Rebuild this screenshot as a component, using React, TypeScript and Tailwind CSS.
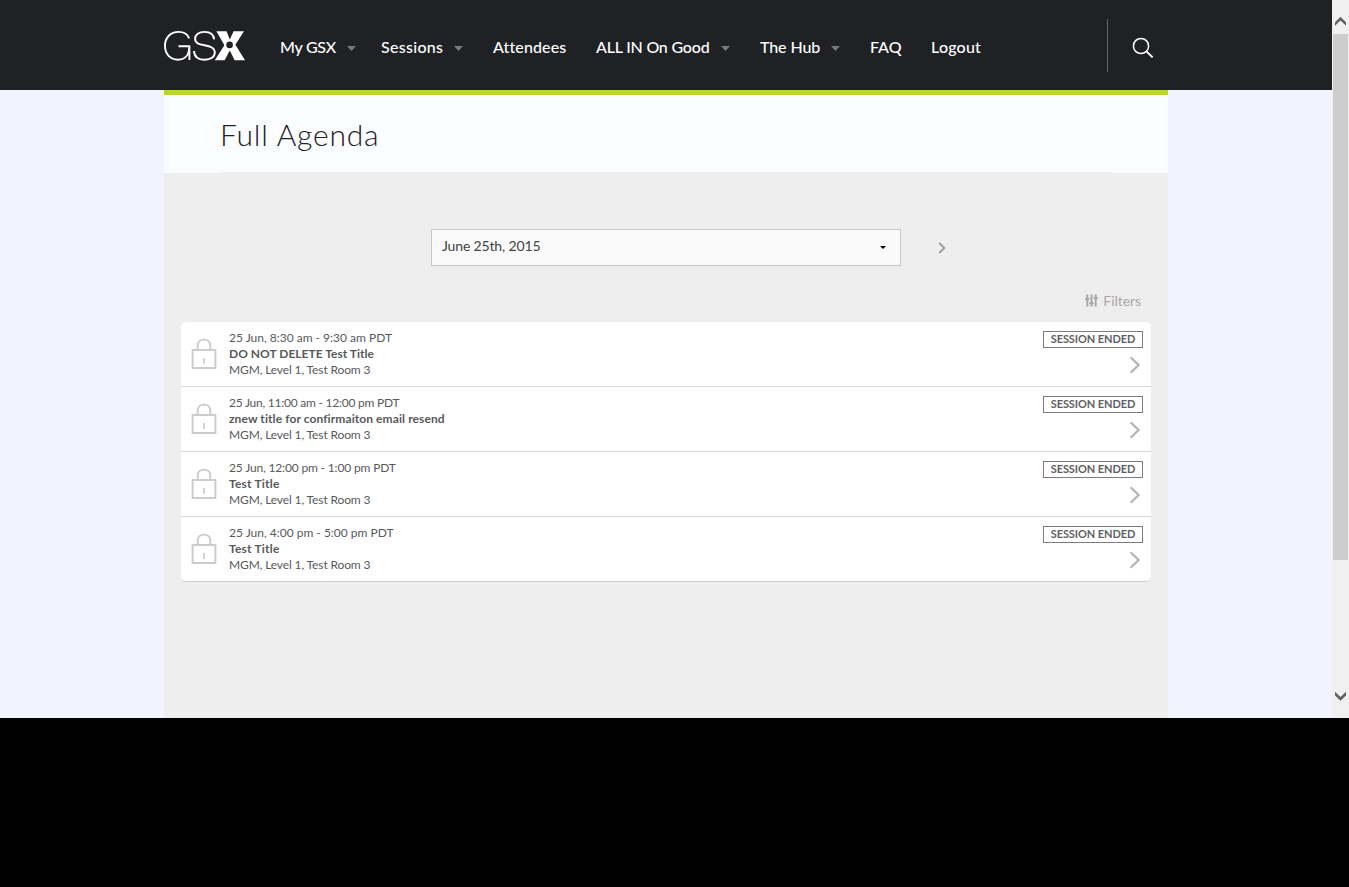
import React from "react";

type NavItem = { label: string; width: string; menu?: boolean; text: string };

const navItems: NavItem[] = [
  { label: "My GSX", width: "w-[76px] mr-[25px]", menu: true, text: "tracking-[-0.25px]" },
  { label: "Sessions", width: "w-[82px] mr-[30px]", menu: true, text: "tracking-[0.3px]" },
  { label: "Attendees", width: "w-[73px] mr-[30px]", text: "tracking-[0.12px]" },
  { label: "ALL IN On Good", width: "w-[134px] mr-[30px]", menu: true, text: "tracking-[-0.2px]" },
  { label: "The Hub", width: "w-[80px] mr-[30px]", menu: true, text: "tracking-[-0.1px]" },
  { label: "FAQ", width: "w-[32px] mr-[29px]", text: "tracking-[0px]" },
  { label: "Logout", width: "w-[50px]", text: "tracking-[0.2px]" },
];

const sessions = [
  { time: "25 Jun, 8:30 am - 9:30 am PDT", timeText: "tracking-[0px]", title: "DO NOT DELETE Test Title", titleText: "tracking-[0.02px]" },
  { time: "25 Jun, 11:00 am - 12:00 pm PDT", timeText: "tracking-[-0.24px]", title: "znew title for confirmaiton email resend", titleText: "tracking-[0.09px]" },
  { time: "25 Jun, 12:00 pm - 1:00 pm PDT", timeText: "tracking-[-0.16px]", title: "Test Title", titleText: "tracking-[0.2px]" },
  { time: "25 Jun, 4:00 pm - 5:00 pm PDT", timeText: "tracking-[0px]", title: "Test Title", titleText: "tracking-[0.2px]" },
];

function Logo() {
  return (
    <svg className="block h-[32px] w-[82px] shrink-0" viewBox="0 0 82 32" fill="none">
      <path
        d="M25.2 8.4C23.4 3.8 19.6 1.9 14.6 1.9C6.5 1.9 1 7.6 1 15.8C1 24.2 6.3 29.7 14 29.7C19.8 29.7 25.3 26.2 25.3 16.2H14.5M25.4 16.2V30"
        stroke="#fff"
        strokeWidth="1.9"
      />
      <path
        d="M50.2 9.3C49.6 4.2 45.6 1.9 40.4 1.9C35 1.9 31.1 4.7 31.1 8.8C31.1 13.2 35 14.3 40.4 15.3C46.2 16.4 50.8 17.6 50.8 22.4C50.8 27 46.5 29.8 41 29.8C34.8 29.8 30.3 27 30 21"
        stroke="#fff"
        strokeWidth="1.9"
      />
      <path d="M52.4 1.2H62.6L65.8 9.6L69.6 1.2H80L71.4 14.8L81 30.2H70.6L65.8 20.6L60.6 30.2H50.8L60.4 15.2Z" fill="#fff" />
      <circle cx="65.6" cy="14.9" r="4.9" fill="#fff" />
      <circle cx="65.6" cy="14.9" r="3.3" fill="#202124" />
    </svg>
  );
}

function Lock() {
  return (
    <svg className="block h-[32px] w-[26px]" viewBox="0 0 26 32" fill="none" stroke="#cacaca" strokeWidth="1.9">
      <rect x="1.6" y="12" width="22.8" height="18" />
      <path d="M6.7 12V7.6C6.7 4 9.4 1.6 13 1.6C16.6 1.6 19.3 4 19.3 7.6V12" />
      <path d="M13 20V26" strokeWidth="1.6" />
    </svg>
  );
}

function Header() {
  return (
    <header className="flex h-[90px] bg-[#202124] pl-[164px]">
      <div className="mt-[30px]">
        <Logo />
      </div>
      <nav className="ml-[34px] flex h-[95px] w-[827px] items-center">
        {navItems.map((n) => (
          <div key={n.label} className={"flex shrink-0 items-center justify-between " + n.width}>
            <span className={"-mt-[1px] mb-[1px] text-[16px] leading-[20px] font-medium whitespace-nowrap text-white " + n.text}>
              {n.label}
            </span>
            {n.menu && (
              <svg className="mt-[2px] h-[5px] w-[9px] shrink-0" viewBox="0 0 9 5">
                <path d="M0 0H9L4.5 5Z" fill="#77787b" />
              </svg>
            )}
          </div>
        ))}
      </nav>
      <div className="mt-[19px] h-[53px] w-px bg-[#636467]" />
      <svg className="mt-[37px] ml-[24px] h-[22px] w-[22px]" viewBox="0 0 22 22" fill="none" stroke="#fff" strokeWidth="1.5">
        <circle cx="9" cy="9" r="7.6" />
        <path d="M14.4 14.4L20.6 20.4" strokeWidth="1.9" />
      </svg>
    </header>
  );
}

type SessionProps = { time: string; timeText: string; title: string; titleText: string; last: boolean };

function SessionRow({ time, timeText, title, titleText, last }: SessionProps) {
  return (
    <li className={"flex h-[65px] border-b " + (last ? "border-[#cccccc] rounded-b-[5px]" : "border-[#d9d9d9]")}>
      <div className="mt-[16px] ml-[10px]">
        <Lock />
      </div>
      <div className="mt-[8px] ml-[12px] grow text-[12px] leading-[16px] text-[#58595b]">
        <div className={timeText}>{time}</div>
        <div className={"font-bold " + titleText}>{title}</div>
        <div className="tracking-[-0.13px]">MGM, Level 1, Test Room 3</div>
      </div>
      <div className="mt-[9px] mr-[8px] flex flex-col items-end">
        <span className="flex h-[17px] w-[100px] items-center justify-center border border-[#7c7c7c] pb-[2px] text-[11px] leading-none font-bold tracking-[-0.08px] whitespace-nowrap text-[#5f6062]">
          SESSION ENDED
        </span>
        <svg className="mt-[8px] mr-[2px] h-[18px] w-[12px]" viewBox="0 0 12 18" fill="none" stroke="#b5b5b5" strokeWidth="2.3">
          <path d="M1.6 1.2L9.6 9L1.6 16.8" />
        </svg>
      </div>
    </li>
  );
}

function Scrollbar() {
  return (
    <div className="flex h-[718px] w-[17px] flex-col items-center bg-[#f0f0f0]">
      <svg className="mt-[16px] h-[10px] w-[13px]" viewBox="0 0 13 10" fill="#606060">
        <path d="M6.5 0.8L12 6.2V9.8L6.5 4.6L1 9.8V6.2Z" />
      </svg>
      <div className="mt-[8px] h-[526px] w-[15px] bg-[#cdcdcd]" />
      <svg className="mt-[131px] h-[10px] w-[13px]" viewBox="0 0 13 10" fill="#606060">
        <path d="M6.5 9.8L12 4.4V0.8L6.5 6L1 0.8V4.4Z" />
      </svg>
    </div>
  );
}

export default function App() {
  return (
    <div className="h-[887px] w-[1349px] overflow-hidden bg-black font-['Lato',sans-serif]">
      <div className="flex h-[718px]">
        <div className="flex w-[1332px] flex-col bg-[#f1f4ff]">
          <Header />
          <main className="ml-[164px] flex w-[1004px] grow flex-col border-t-[5px] border-[#bad432] bg-[#eeeeee]">
            <div className="h-[78px] bg-[#fbfcff] px-[56px]">
              <h1 className="h-[78px] border-b border-[#eeeeee] pt-[19px] text-[30px] leading-[40px] font-light tracking-[0.8px] text-[#202124]">
                Full Agenda
              </h1>
            </div>
            <div className="mt-[56px] ml-[267px] flex items-center">
              <div className="flex h-[37px] w-[470px] items-center justify-between border border-[#c8c8c8] bg-[#fafafa] pr-[14px] pl-[10px]">
                <span className="-mt-[4px] text-[14px] leading-[20px] tracking-[-0.15px] text-[#414244]">June 25th, 2015</span>
                <svg className="h-[3px] w-[6px]" viewBox="0 0 6 3">
                  <path d="M0 0H6L3 3Z" fill="#000" />
                </svg>
              </div>
              <svg className="mt-[1px] ml-[37px] h-[12px] w-[8px]" viewBox="0 0 8 12" fill="none" stroke="#9b9b9b" strokeWidth="1.8">
                <path d="M1.2 1L6.4 6L1.2 11" />
              </svg>
            </div>
            <div className="mt-[24px] mr-[27px] flex h-[20px] items-center justify-end">
              <svg className="mr-[5px] h-[13px] w-[13px]" viewBox="0 0 13 13" stroke="#a8a8a8" strokeWidth="2">
                <path d="M2.3 0.4V12.4M6.5 0.4V12.4M10.7 0.4V12.4" />
                <path d="M0.2 5H4.4M4.4 9.3H8.6M8.6 4H12.8" />
              </svg>
              <span className="mt-[1px] text-[14px] leading-[20px] tracking-[-0.05px] text-[#a8a8a8]">Filters</span>
            </div>
            <ul className="mt-[12px] ml-[17px] w-[970px] rounded-[5px] bg-white">
              {sessions.map((s, i) => (
                <SessionRow key={i} {...s} last={i === sessions.length - 1} />
              ))}
            </ul>
          </main>
        </div>
        <Scrollbar />
      </div>
    </div>
  );
}
